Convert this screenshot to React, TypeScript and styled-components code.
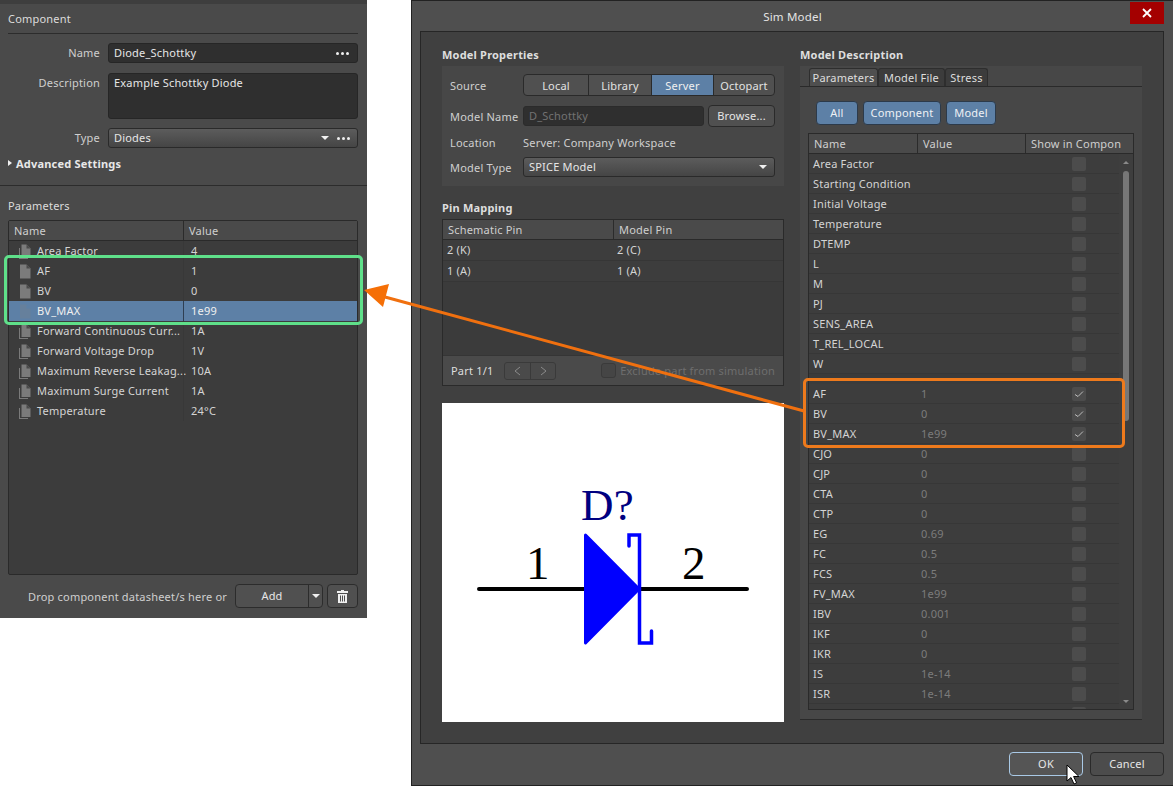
import React from "react";
import styled, { createGlobalStyle } from "styled-components";

const GlobalStyle = createGlobalStyle`
  html, body {
    margin: 0;
    padding: 0;
    background: #fff;
    font-family: "Noto Sans", "Open Sans", sans-serif;
    font-size: 11px;
    letter-spacing: 0.2px;
    color: #dcdcdc;
  }
`;

const Page = styled.div`
  position: relative;
  width: 1173px;
  height: 796px;
  display: flex;
  align-items: flex-start;
  gap: 44px;
  overflow: hidden;
`;

/* left panel */
const Panel = styled.div`
  width: 367px;
  height: 618px;
  flex: none;
  background: #4a4a4a;
  border-top: 4px solid #3e3e3e;
  box-sizing: border-box;
  display: flex;
  flex-direction: column;
`;

const PanelSection = styled.div`
  padding: 0 9px 0 8px;
  display: flex;
  flex-direction: column;
`;

const PanelHeading = styled.div`
  height: 29px;
  line-height: 30px;
  border-bottom: 1px solid #2c2c2c;
  margin-bottom: 9px;
`;

const FieldRow = styled.div<{ $h: number; $mb: number }>`
  display: grid;
  grid-template-columns: 92px 250px;
  column-gap: 8px;
  height: ${(p) => p.$h}px;
  margin-bottom: ${(p) => p.$mb}px;
`;

const FieldLabel = styled.div`
  text-align: right;
  line-height: 20px;
  color: #cfcfcf;
`;

const TextField = styled.div`
  background: #2f2f2f;
  border: 1px solid #262626;
  border-radius: 3px;
  box-sizing: border-box;
  padding: 0 8px 0 5px;
  line-height: 18px;
  display: flex;
  justify-content: space-between;
  color: #e6e6e6;
`;

const Combo = styled.div`
  background: linear-gradient(#5c5c5c, #454545);
  border: 1px solid #2a2a2a;
  border-radius: 3px;
  box-sizing: border-box;
  padding: 0 7px 0 5px;
  line-height: 18px;
  display: flex;
  align-items: center;
  gap: 8px;
  color: #e6e6e6;
`;

const ComboText = styled.span`
  flex: 1;
`;

const Caret = styled.span`
  width: 0;
  height: 0;
  border-left: 4px solid transparent;
  border-right: 4px solid transparent;
  border-top: 4px solid #f0f0f0;
`;

const Dots = styled.span`
  display: inline-flex;
  align-items: center;
  gap: 2px;
  height: 18px;
  i {
    width: 3px;
    height: 3px;
    border-radius: 50%;
    background: #f0f0f0;
  }
`;

const Advanced = styled.div`
  display: flex;
  align-items: center;
  gap: 4px;
  font-weight: 700;
  color: #e8e8e8;
  height: 16px;
  margin-top: 7px;
  &::before {
    content: "";
    border-top: 3.5px solid transparent;
    border-bottom: 3.5px solid transparent;
    border-left: 4px solid #f0f0f0;
  }
`;

const PanelRule = styled.div`
  height: 1px;
  margin-top: 14px;
  background: #2c2c2c;
`;

const SectionTitle = styled.div`
  height: 14px;
  line-height: 14px;
  margin: 13px 0 7px;
`;

const ParamTable = styled.div`
  height: 355px;
  box-sizing: border-box;
  border: 1px solid #2a2a2a;
  border-radius: 2px;
  background: #3c3c3c;
`;

const TableHeader = styled.div<{ $cols: string }>`
  display: grid;
  grid-template-columns: ${(p) => p.$cols};
  height: 19px;
  line-height: 19px;
  background: #4a4a4a;
  border-bottom: 1px solid #2a2a2a;
  color: #cfcfcf;
`;

const HeaderCell = styled.div`
  padding-left: 5px;
  position: relative;
  white-space: nowrap;
  overflow: hidden;
  &:not(:first-child) {
    border-left: 1px solid #2b2b2b;
  }
`;

const ParamRow = styled.div<{ $active?: boolean }>`
  display: grid;
  grid-template-columns: 174px 1fr;
  height: 20px;
  line-height: 20px;
  background: ${(p) => (p.$active ? "#5d80a6" : "transparent")};
  color: ${(p) => (p.$active ? "#f0f0f0" : "#d4d4d4")};
`;

const NameCell = styled.div`
  display: flex;
  align-items: center;
  gap: 5px;
  padding-left: 9px;
  white-space: nowrap;
`;

const ValueCell = styled.div<{ $active?: boolean }>`
  padding-left: 7px;
  border-left: 1px solid ${(p) => (p.$active ? "#2f3f52" : "#383838")};
`;

const DropRow = styled.div`
  display: flex;
  justify-content: flex-end;
  align-items: center;
  margin-top: 9px;
  height: 24px;
`;

const DropText = styled.span`
  color: #cfcfcf;
  margin-right: 8px;
`;

const SplitButton = styled.div`
  width: 88px;
  height: 24px;
  box-sizing: border-box;
  display: grid;
  grid-template-columns: 72px 1fr;
  border: 1px solid #2c2c2c;
  border-radius: 4px;
  background: #505050;
  margin-right: 4px;
  line-height: 22px;
  text-align: center;
  color: #e6e6e6;
`;

const SplitCaret = styled.div`
  border-left: 1px solid #2c2c2c;
  display: flex;
  align-items: center;
  justify-content: center;
`;

const IconButton = styled.div`
  width: 31px;
  height: 24px;
  box-sizing: border-box;
  border: 1px solid #2c2c2c;
  border-radius: 4px;
  background: #505050;
  display: flex;
  align-items: center;
  justify-content: center;
`;

/* dialog */
const Dialog = styled.div`
  width: 762px;
  height: 786px;
  flex: none;
  box-sizing: border-box;
  background: #4f4f4f;
  border: 1px solid #222;
  border-right: none;
  display: flex;
  flex-direction: column;
  position: relative;
`;

const TitleBar = styled.div`
  height: 30px;
  flex: none;
  text-align: center;
  line-height: 31px;
  font-size: 11.5px;
  color: #e4e4e4;
  position: relative;
`;

const CloseButton = styled.div`
  position: absolute;
  right: 9px;
  top: 1px;
  width: 34px;
  height: 22px;
  background: #a40000;
  display: flex;
  align-items: center;
  justify-content: center;
`;

const DialogBody = styled.div`
  margin: 0 9px 0 8px;
  height: 713px;
  flex: none;
  box-sizing: border-box;
  border: 1px solid #262626;
  background: #404040;
  padding: 16px 20px 0 21px;
  display: grid;
  grid-template-columns: 342px 342px;
  column-gap: 16px;
`;

const Column = styled.div`
  display: flex;
  flex-direction: column;
`;

const GroupTitle = styled.div`
  font-weight: 700;
  height: 14px;
  line-height: 14px;
  margin-bottom: 4px;
  color: #dedede;
`;

const Group = styled.div`
  height: 120px;
  box-sizing: border-box;
  background: #474747;
  padding: 8px 9px 0 8px;
  margin-bottom: 15px;
  display: flex;
  flex-direction: column;
`;

const PropRow = styled.div<{ $h: number; $mb: number }>`
  display: grid;
  grid-template-columns: 73px 1fr;
  height: ${(p) => p.$h}px;
  margin-bottom: ${(p) => p.$mb}px;
  align-items: center;
  color: #cfcfcf;
`;

const Segments = styled.div`
  display: grid;
  grid-template-columns: 64px 63px 62px 1fr;
  height: 22px;
  box-sizing: border-box;
  border: 1px solid #2a2a2a;
  border-radius: 4px;
  overflow: hidden;
  background: #505050;
`;

const Segment = styled.div<{ $on?: boolean }>`
  text-align: center;
  line-height: 22px;
  background: ${(p) => (p.$on ? "#5d80a6" : "transparent")};
  color: ${(p) => (p.$on ? "#f0f0f0" : "#e2e2e2")};
  &:not(:first-child) {
    border-left: 1px solid #2a2a2a;
  }
`;

const NameLine = styled.div`
  display: grid;
  grid-template-columns: 181px 67px;
  column-gap: 4px;
  align-items: center;
`;

const DisabledField = styled.div`
  height: 20px;
  box-sizing: border-box;
  background: #2f2f2f;
  border: 1px solid #2b2b2b;
  border-radius: 3px;
  padding-left: 5px;
  line-height: 18px;
  color: #727272;
`;

const PushButton = styled.div`
  height: 22px;
  box-sizing: border-box;
  border: 1px solid #2a2a2a;
  border-radius: 4px;
  background: #505050;
  text-align: center;
  line-height: 20px;
  color: #e6e6e6;
`;

const PinTable = styled.div`
  height: 167px;
  flex: none;
  box-sizing: border-box;
  border: 1px solid #2a2a2a;
  background: #3b3b3b;
  display: flex;
  flex-direction: column;
`;

const PinRow = styled.div`
  display: grid;
  grid-template-columns: 170px 1fr;
  height: 20px;
  line-height: 20px;
  padding-left: 4px;
  border-bottom: 1px solid #363636;
  background: #3d3d3d;
  color: #d4d4d4;
`;

const PinFooter = styled.div`
  margin-top: auto;
  height: 29px;
  background: #4a4a4a;
  border-top: 1px solid #353535;
  display: flex;
  align-items: center;
  padding: 0 8px;
  color: #dedede;
`;

const Pager = styled.div`
  width: 52px;
  height: 18px;
  box-sizing: border-box;
  margin-left: 11px;
  border: 1px solid #3a3a3a;
  border-radius: 3px;
  display: grid;
  grid-template-columns: 1fr 1fr;
  align-items: center;
  justify-items: center;
  svg + svg {
    border-left: 1px solid #3a3a3a;
  }
`;

const Exclude = styled.div`
  margin-left: auto;
  display: flex;
  align-items: center;
  gap: 4px;
  color: #6e6e6e;
`;

const EmptyBox = styled.div`
  width: 15px;
  height: 15px;
  box-sizing: border-box;
  border: 1px solid #3a3a3a;
  border-radius: 3px;
  background: #454545;
`;

const Preview = styled.div`
  height: 319px;
  margin-top: 17px;
  background: #fff;
  display: flex;
`;

const TabGroup = styled.div`
  height: 654px;
  background: #474747;
  border-bottom: 1px solid #2a2a2a;
  padding-top: 2px;
  box-sizing: border-box;
  display: flex;
  flex-direction: column;
`;

const TabStrip = styled.div`
  height: 19px;
  flex: none;
  box-sizing: border-box;
  display: flex;
  padding-left: 9px;
  border-bottom: 1px solid #2a2a2a;
`;

const Tab = styled.div<{ $on?: boolean; $w: number }>`
  width: ${(p) => p.$w}px;
  height: 18px;
  box-sizing: border-box;
  border: 1px solid #2e2e2e;
  border-bottom: none;
  border-radius: 3px 3px 0 0;
  text-align: center;
  line-height: 17px;
  background: ${(p) => (p.$on ? "#4f4f4f" : "#3c3c3c")};
  color: #dedede;
`;

const FilterBar = styled.div`
  display: flex;
  gap: 5px;
  padding: 14px 0 8px 16px;
  flex: none;
`;

const FilterButton = styled.div<{ $w: number }>`
  width: ${(p) => p.$w}px;
  height: 24px;
  box-sizing: border-box;
  border: 1px solid #2c3a4a;
  border-radius: 4px;
  background: #5d80a6;
  text-align: center;
  line-height: 22px;
  color: #eef1f5;
`;

const ModelTable = styled.div`
  margin-left: 8px;
  width: 326px;
  height: 577px;
  flex: none;
  box-sizing: border-box;
  border: 1px solid #2a2a2a;
  background: #3b3b3b;
  display: flex;
  flex-direction: column;
`;

const ModelBody = styled.div`
  flex: 1;
  min-height: 0;
  display: grid;
  grid-template-columns: 1fr 14px;
`;

const ModelRows = styled.div`
  overflow: hidden;
`;

const ModelRow = styled.div`
  display: grid;
  grid-template-columns: 108px 108px 1fr;
  height: 20px;
  line-height: 20px;
  border-bottom: 1px solid #373737;
  box-sizing: border-box;
  background: #3d3d3d;
`;

const RowGap = styled.div`
  height: 10px;
`;

const ModelName = styled.div`
  padding-left: 4px;
  color: #d4d4d4;
`;

const ModelValue = styled.div`
  padding-left: 4px;
  color: #7c7c7c;
`;

const CheckCell = styled.div`
  display: flex;
  align-items: center;
  padding-left: 47px;
`;

const CheckBox = styled.div`
  width: 14px;
  height: 14px;
  border-radius: 2px;
  background: #4c4c4c;
  display: flex;
  align-items: center;
  justify-content: center;
`;

const Scrollbar = styled.div`
  position: relative;
  background: #3e3e3e;
  display: flex;
  flex-direction: column;
  align-items: center;
  padding-top: 17px;
`;

const Thumb = styled.div`
  width: 6px;
  height: 250px;
  border-radius: 3px;
  background: #777;
`;

const ScrollArrow = styled.span<{ $down?: boolean }>`
  position: absolute;
  ${(p) => (p.$down ? "bottom: 6px;" : "top: 7px;")}
  border-left: 3.5px solid transparent;
  border-right: 3.5px solid transparent;
  ${(p) => (p.$down ? "border-top" : "border-bottom")}: 3.5px solid #8a8a8a;
`;

const DialogFooter = styled.div`
  flex: 1;
  display: flex;
  justify-content: flex-end;
  align-items: flex-start;
  gap: 7px;
  padding: 8px 9px 0 0;
`;

const FooterButton = styled.div<{ $focus?: boolean }>`
  width: 74px;
  height: 24px;
  box-sizing: border-box;
  border: 1px solid ${(p) => (p.$focus ? "#a9c9e6" : "#2a2a2a")};
  border-radius: 4px;
  background: ${(p) => (p.$focus ? "#555" : "#4c4c4c")};
  text-align: center;
  line-height: 22px;
  color: #e6e6e6;
`;

const MouseCursor = styled.svg`
  position: absolute;
  left: 654px;
  top: 763px;
`;

/* annotations lying over the screenshot */
const Highlight = styled.div<{ $color: string; $x: number; $y: number; $w: number; $h: number }>`
  position: absolute;
  left: ${(p) => p.$x}px;
  top: ${(p) => p.$y}px;
  width: ${(p) => p.$w}px;
  height: ${(p) => p.$h}px;
  box-sizing: border-box;
  border: 3px solid ${(p) => p.$color};
  border-radius: 5px;
  pointer-events: none;
`;

const ArrowLayer = styled.svg`
  position: absolute;
  left: 0;
  top: 0;
  pointer-events: none;
`;

const DocIcon = ({ stacked, dim }: { stacked?: boolean; dim?: boolean }) => (
  <svg width="14" height="15" viewBox="0 0 14 15" style={{ flex: "none" }}>
    {stacked && <path d="M1 4h1v10h8v1H1z" fill="#7a7a7a" />}
    <path
      d={stacked ? "M3.5 0.5h5l4 4v8.5h-9z" : "M2 0.5h6.5l4 4V14.5H2z"}
      fill={dim ? "#66809c" : "#7b7b7b"}
    />
    <path d={stacked ? "M8.5 0.5l4 4h-4z" : "M8.5 0.5l4 4h-4z"} fill={dim ? "#5d80a6" : "#4a4a4a"} />
  </svg>
);

const params = [
  { name: "Area Factor", value: "4", stacked: true },
  { name: "AF", value: "1" },
  { name: "BV", value: "0" },
  { name: "BV_MAX", value: "1e99", active: true },
  { name: "Forward Continuous Curr...", value: "1A", stacked: true },
  { name: "Forward Voltage Drop", value: "1V", stacked: true },
  { name: "Maximum Reverse Leakag...", value: "10A", stacked: true },
  { name: "Maximum Surge Current", value: "1A", stacked: true },
  { name: "Temperature", value: "24°C", stacked: true },
];

const topModelRows = [
  "Area Factor",
  "Starting Condition",
  "Initial Voltage",
  "Temperature",
  "DTEMP",
  "L",
  "M",
  "PJ",
  "SENS_AREA",
  "T_REL_LOCAL",
  "W",
];

const lowerModelRows: [string, string, boolean?][] = [
  ["AF", "1", true],
  ["BV", "0", true],
  ["BV_MAX", "1e99", true],
  ["CJO", "0"],
  ["CJP", "0"],
  ["CTA", "0"],
  ["CTP", "0"],
  ["EG", "0.69"],
  ["FC", "0.5"],
  ["FCS", "0.5"],
  ["FV_MAX", "1e99"],
  ["IBV", "0.001"],
  ["IKF", "0"],
  ["IKR", "0"],
  ["IS", "1e-14"],
  ["ISR", "1e-14"],
  ["", ""],
];

const Check = () => (
  <svg width="10" height="8" viewBox="0 0 10 8">
    <path d="M1 4.5l3 2 5-5" fill="none" stroke="#bdbdbd" strokeWidth="1" />
  </svg>
);

const ModelLine = ({ name, value, checked }: { name: string; value: string; checked?: boolean }) => (
  <ModelRow>
    <ModelName>{name}</ModelName>
    <ModelValue>{value}</ModelValue>
    <CheckCell>
      <CheckBox>{checked && <Check />}</CheckBox>
    </CheckCell>
  </ModelRow>
);

function DiodeSymbol() {
  return (
    <svg width="342" height="319" viewBox="442 403 342 319">
      <text x="581" y="520" fontFamily="Liberation Serif, serif" fontSize="45" fill="#000080">
        D?
      </text>
      <text x="526" y="579" fontFamily="Liberation Serif, serif" fontSize="47" fill="#000">
        1
      </text>
      <text x="682" y="579" fontFamily="Liberation Serif, serif" fontSize="47" fill="#000">
        2
      </text>
      <path d="M479 589H590M640 589H747" stroke="#000" strokeWidth="4" strokeLinecap="round" />
      <path d="M585.5 535L639 589L585.5 643Z" fill="#0000ff" stroke="#0000ff" strokeWidth="3" strokeLinejoin="round" />
      <path
        d="M629 546V535H639.5V643H651.5V631"
        fill="none"
        stroke="#0000ff"
        strokeWidth="3.5"
        strokeLinecap="round"
        strokeLinejoin="miter"
      />
    </svg>
  );
}

export default function App() {
  return (
    <>
      <GlobalStyle />
      <Page>
        <Panel>
          <PanelSection>
            <PanelHeading>Component</PanelHeading>
            <FieldRow $h={20} $mb={10}>
              <FieldLabel>Name</FieldLabel>
              <TextField>
                Diode_Schottky
                <Dots>
                  <i />
                  <i />
                  <i />
                </Dots>
              </TextField>
            </FieldRow>
            <FieldRow $h={46} $mb={9}>
              <FieldLabel>Description</FieldLabel>
              <TextField>Example Schottky Diode</TextField>
            </FieldRow>
            <FieldRow $h={20} $mb={0}>
              <FieldLabel>Type</FieldLabel>
              <Combo>
                <ComboText>Diodes</ComboText>
                <Caret />
                <Dots>
                  <i />
                  <i />
                  <i />
                </Dots>
              </Combo>
            </FieldRow>
            <Advanced>Advanced Settings</Advanced>
          </PanelSection>
          <PanelRule />
          <PanelSection>
            <SectionTitle>Parameters</SectionTitle>
            <ParamTable>
              <TableHeader $cols="174px 1fr">
                <HeaderCell>Name</HeaderCell>
                <HeaderCell>Value</HeaderCell>
              </TableHeader>
              {params.map((p) => (
                <ParamRow key={p.name} $active={p.active}>
                  <NameCell>
                    <DocIcon stacked={p.stacked} dim={p.active} />
                    {p.name}
                  </NameCell>
                  <ValueCell $active={p.active}>{p.value}</ValueCell>
                </ParamRow>
              ))}
            </ParamTable>
            <DropRow>
              <DropText>Drop component datasheet/s here or</DropText>
              <SplitButton>
                Add
                <SplitCaret>
                  <Caret />
                </SplitCaret>
              </SplitButton>
              <IconButton>
                <svg width="11" height="13" viewBox="0 0 11 13">
                  <path
                    d="M4 0h3v1h4v2H0V1h4zM1 4h9v9H1zM3 5.5v6h1v-6zM5 5.5v6h1v-6zM7 5.5v6h1v-6z"
                    fill="#f0f0f0"
                    fillRule="evenodd"
                  />
                </svg>
              </IconButton>
            </DropRow>
          </PanelSection>
        </Panel>

        <Dialog>
          <TitleBar>
            Sim Model
            <CloseButton>
              <svg width="10" height="10" viewBox="0 0 10 10">
                <path d="M1 1l8 8M9 1l-8 8" stroke="#fff" strokeWidth="1.8" />
              </svg>
            </CloseButton>
          </TitleBar>
          <DialogBody>
            <Column>
              <GroupTitle>Model Properties</GroupTitle>
              <Group>
                <PropRow $h={22} $mb={9}>
                  Source
                  <Segments>
                    <Segment>Local</Segment>
                    <Segment>Library</Segment>
                    <Segment $on>Server</Segment>
                    <Segment>Octopart</Segment>
                  </Segments>
                </PropRow>
                <PropRow $h={22} $mb={5}>
                  Model Name
                  <NameLine>
                    <DisabledField>D_Schottky</DisabledField>
                    <PushButton>Browse...</PushButton>
                  </NameLine>
                </PropRow>
                <PropRow $h={20} $mb={5}>
                  Location
                  <span>Server: Company Workspace</span>
                </PropRow>
                <PropRow $h={20} $mb={0}>
                  Model Type
                  <Combo>
                    <ComboText>SPICE Model</ComboText>
                    <Caret />
                  </Combo>
                </PropRow>
              </Group>
              <GroupTitle>Pin Mapping</GroupTitle>
              <PinTable>
                <TableHeader $cols="170px 1fr">
                  <HeaderCell>Schematic Pin</HeaderCell>
                  <HeaderCell>Model Pin</HeaderCell>
                </TableHeader>
                <PinRow>
                  <span>2 (K)</span>
                  <span>2 (C)</span>
                </PinRow>
                <PinRow>
                  <span>1 (A)</span>
                  <span>1 (A)</span>
                </PinRow>
                <PinFooter>
                  Part 1/1
                  <Pager>
                    <svg width="25" height="16" viewBox="0 0 25 16">
                      <path d="M15 4l-5 4 5 4" fill="none" stroke="#8a8a8a" />
                    </svg>
                    <svg width="25" height="16" viewBox="0 0 25 16">
                      <path d="M10 4l5 4-5 4" fill="none" stroke="#8a8a8a" />
                    </svg>
                  </Pager>
                  <Exclude>
                    <EmptyBox />
                    Exclude part from simulation
                  </Exclude>
                </PinFooter>
              </PinTable>
              <Preview>
                <DiodeSymbol />
              </Preview>
            </Column>
            <Column>
              <GroupTitle>Model Description</GroupTitle>
              <TabGroup>
                <TabStrip>
                  <Tab $on $w={69}>
                    Parameters
                  </Tab>
                  <Tab $w={67}>Model File</Tab>
                  <Tab $w={43}>Stress</Tab>
                </TabStrip>
                <FilterBar>
                  <FilterButton $w={42}>All</FilterButton>
                  <FilterButton $w={78}>Component</FilterButton>
                  <FilterButton $w={50}>Model</FilterButton>
                </FilterBar>
                <ModelTable>
                  <TableHeader $cols="108px 108px 1fr">
                    <HeaderCell>Name</HeaderCell>
                    <HeaderCell>Value</HeaderCell>
                    <HeaderCell>Show in Compon</HeaderCell>
                  </TableHeader>
                  <ModelBody>
                    <ModelRows>
                      {topModelRows.map((name) => (
                        <ModelLine key={name} name={name} value="" />
                      ))}
                      <RowGap />
                      {lowerModelRows.map(([name, value, checked]) => (
                        <ModelLine key={name || "clipped"} name={name} value={value} checked={checked} />
                      ))}
                    </ModelRows>
                    <Scrollbar>
                      <ScrollArrow />
                      <Thumb />
                      <ScrollArrow $down />
                    </Scrollbar>
                  </ModelBody>
                </ModelTable>
              </TabGroup>
            </Column>
          </DialogBody>
          <DialogFooter>
            <FooterButton $focus>OK</FooterButton>
            <FooterButton>Cancel</FooterButton>
          </DialogFooter>
          <MouseCursor width="14" height="22" viewBox="0 0 14 22">
            <path d="M1 1v16l4-3.5 3 6.5 2.6-1.2-3-6.3H13z" fill="#fff" stroke="#000" strokeWidth="1" />
          </MouseCursor>
        </Dialog>

        <Highlight $color="#5fe08a" $x={4} $y={255} $w={359} $h={70} />
        <Highlight $color="#ee7a1c" $x={803} $y={378} $w={322} $h={70} />
        <ArrowLayer width="1173" height="796" viewBox="0 0 1173 796">
          <path d="M804 411L385 297" stroke="#f0700f" strokeWidth="3" fill="none" />
          <path d="M364 290L389 284L383 307Z" fill="#f56f06" />
        </ArrowLayer>
      </Page>
    </>
  );
}
